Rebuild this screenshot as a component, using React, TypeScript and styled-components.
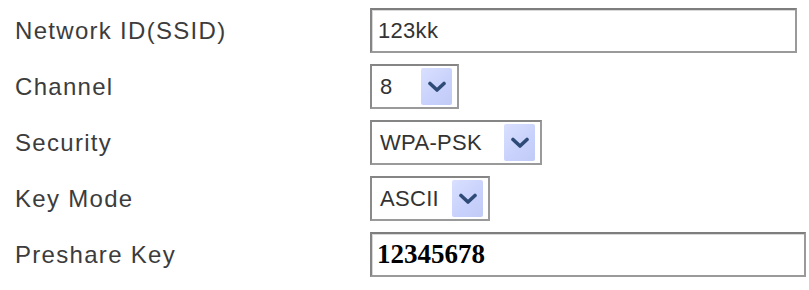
import React from "react";
import styled, { createGlobalStyle } from "styled-components";

const Global = createGlobalStyle`
  html, body { margin: 0; padding: 0; background: #ffffff; }
  body { font-family: "Liberation Sans", Arial, sans-serif; }
`;

const Form = styled.div`
  display: flex;
  flex-direction: column;
  gap: 11px;
  padding: 8px 0 0 15px;
`;

const Row = styled.div`
  display: grid;
  grid-template-columns: 355px auto;
  align-items: center;
  height: 45px;
`;

const Label = styled.div`
  font-size: 24px;
  letter-spacing: 1.3px;
  color: #3c3c3c;
  padding-top: 1px;
`;

const Field = styled.div<{ $w: number; $bold?: boolean }>`
  box-sizing: border-box;
  width: ${(p) => p.$w}px;
  height: 45px;
  border: 2px solid #9a9a9a;
  border-top-color: #7e7e7e;
  border-left-color: #848484;
  box-shadow: inset 1px 1px 0 #d8d8d8;
  display: flex;
  align-items: center;
  padding-left: ${(p) => (p.$bold ? 5 : 6)}px;
  font-family: ${(p) =>
    p.$bold ? '"Liberation Serif", "Times New Roman", serif' : '"Liberation Sans", Arial, sans-serif'};
  font-weight: ${(p) => (p.$bold ? 700 : 400)};
  font-size: ${(p) => (p.$bold ? 27 : 22)}px;
  color: ${(p) => (p.$bold ? "#000" : "#333")};
  letter-spacing: ${(p) => (p.$bold ? "0" : "0.3px")};
`;

const Select = styled.div<{ $w: number }>`
  box-sizing: border-box;
  width: ${(p) => p.$w}px;
  height: 45px;
  border: 2px solid #9a9a9a;
  border-top-color: #858585;
  border-left-color: #8a8a8a;
  display: flex;
  align-items: center;
  justify-content: space-between;
  padding: 3px 5px 3px 8px;
  font-size: 22px;
  color: #333;
  letter-spacing: 0.3px;
`;

const ArrowButton = styled.div`
  width: 31px;
  height: 37px;
  background: linear-gradient(135deg, #d9e0ff 0%, #c8d1fb 60%, #c0cbf6 100%);
  border-radius: 2px;
  display: flex;
  align-items: center;
  justify-content: center;
`;

const Chevron = () => (
  <svg width="18" height="12" viewBox="0 0 18 12">
    <path d="M2 2.5 L9 9 L16 2.5" fill="none" stroke="#2e4a76" strokeWidth="3.6" strokeLinecap="round" strokeLinejoin="round" />
  </svg>
);

export default function App() {
  return (
    <>
      <Global />
      <Form>
        <Row>
          <Label>Network ID(SSID)</Label>
          <Field $w={427}>123kk</Field>
        </Row>
        <Row>
          <Label>Channel</Label>
          <Select $w={89}>
            <span>8</span>
            <ArrowButton><Chevron /></ArrowButton>
          </Select>
        </Row>
        <Row>
          <Label>Security</Label>
          <Select $w={172}>
            <span>WPA-PSK</span>
            <ArrowButton><Chevron /></ArrowButton>
          </Select>
        </Row>
        <Row>
          <Label>Key Mode</Label>
          <Select $w={120}>
            <span>ASCII</span>
            <ArrowButton><Chevron /></ArrowButton>
          </Select>
        </Row>
        <Row>
          <Label>Preshare Key</Label>
          <Field $w={436} $bold>12345678</Field>
        </Row>
      </Form>
    </>
  );
}
